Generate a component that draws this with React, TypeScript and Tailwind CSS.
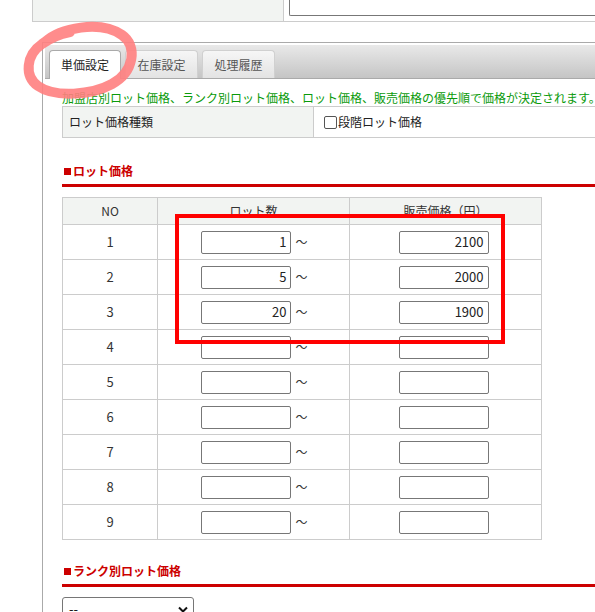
import React from "react";

const lotRows = [
  { no: 1, lot: "1", price: "2100" },
  { no: 2, lot: "5", price: "2000" },
  { no: 3, lot: "20", price: "1900" },
  { no: 4, lot: "", price: "" },
  { no: 5, lot: "", price: "" },
  { no: 6, lot: "", price: "" },
  { no: 7, lot: "", price: "" },
  { no: 8, lot: "", price: "" },
  { no: 9, lot: "", price: "" },
];

const tabs = ["単価設定", "在庫設定", "処理履歴"];

function NumBox({ value }: { value: string }) {
  return (
    <div className="flex h-[23px] w-[90px] items-center justify-end rounded-[2px] border border-[#777] bg-white pr-[4px] text-[13px] text-[#222]">
      {value}
    </div>
  );
}

function SectionTitle({ children }: { children: React.ReactNode }) {
  return (
    <div>
      <div className="flex items-center pl-[2px] text-[12px] font-bold leading-[18px] text-[#cc0000]">
        <span className="mr-[2px] inline-block h-[7px] w-[7px] bg-[#cc0000]" />
        {children}
      </div>
      <div className="mt-[4px] h-[3px] w-full bg-[#cc0000]" />
    </div>
  );
}

export default function App() {
  return (
    <div
      className="relative h-[612px] w-[595px] overflow-hidden bg-white text-[12px] text-[#333]"
      style={{ fontFamily: '"Noto Sans CJK JP", "Noto Sans", sans-serif' }}
    >
      {/* tail of the panel above */}
      <div className="ml-[32px] flex h-[22px] w-[700px] border-b border-l border-[#ccc]">
        <div className="w-[251px] border-r border-[#ccc] bg-[#f2f4f2]" />
        <div className="pl-[5px]">
          <div className="h-[16px] w-[400px] rounded-bl-[2px] border-b border-l border-[#777]" />
        </div>
      </div>

      {/* tab panel */}
      <div className="ml-[42px] mt-[20px] w-[700px] border-l border-t border-[#aaa] pl-[2px] pt-[2px]">
        <div className="flex h-[34px] items-end gap-[4px] border-b border-[#aaa] bg-gradient-to-b from-[#e9e9e9] to-[#c5c5c5] pl-[4px]">
          {tabs.map((t, i) =>
            i === 0 ? (
              <div
                key={t}
                className="-mb-px flex h-[29px] w-[72px] items-center justify-center rounded-t-[4px] border-x border-t border-[#aaa] bg-white text-[#222]"
              >
                {t}
              </div>
            ) : (
              <div
                key={t}
                className="flex h-[28px] w-[73px] items-center justify-center rounded-t-[4px] border-x border-t border-[#d0d0d0] bg-gradient-to-b from-[#f6f6f6] to-[#e3e3e3] text-[#555]"
              >
                {t}
              </div>
            ),
          )}
        </div>

        <div className="pl-[17px]">
          <p className="mt-[10px] whitespace-nowrap text-[12px] leading-[17px] text-[#0a9a0a]">
            加盟店別ロット価格、ランク別ロット価格、ロット価格、販売価格の優先順で価格が決定されます。
          </p>

          <div className="flex h-[32px] w-[640px] border border-[#ccc]">
            <div className="flex w-[251px] items-center border-r border-[#ccc] bg-[#f2f4f2] pl-[6px] text-[#222]">
              ロット価格種類
            </div>
            <div className="flex items-center pl-[10px] text-[#222]">
              <span className="mr-[1px] inline-block h-[13px] w-[13px] rounded-[2px] border border-[#555] bg-white" />
              段階ロット価格
            </div>
          </div>

          <div className="mt-[24px] w-[640px]">
            <SectionTitle>ロット価格</SectionTitle>
          </div>

          <table className="mt-[10px] w-[480px] table-fixed border-collapse text-center">
            <colgroup>
              <col className="w-[95px]" />
              <col className="w-[192px]" />
              <col className="w-[192px]" />
            </colgroup>
            <thead>
              <tr className="h-[27px] bg-[#f2f4f2]">
                <th className="border border-[#ccc] font-normal">NO</th>
                <th className="border border-[#ccc] font-normal">ロット数</th>
                <th className="border border-[#ccc] font-normal">販売価格（円）</th>
              </tr>
            </thead>
            <tbody>
              {lotRows.map((r) => (
                <tr key={r.no} className="h-[35px]">
                  <td className="border border-[#ccc] text-[13px]">{r.no}</td>
                  <td className="border border-[#ccc]">
                    <div className="flex items-center justify-center gap-[4px] pl-[2px]">
                      <NumBox value={r.lot} />
                      <span className="text-[12px]">～</span>
                    </div>
                  </td>
                  <td className="border border-[#ccc]">
                    <div className="flex justify-center pr-[4px]">
                      <NumBox value={r.price} />
                    </div>
                  </td>
                </tr>
              ))}
            </tbody>
          </table>

          <div className="mt-[22px] w-[640px]">
            <SectionTitle>ランク別ロット価格</SectionTitle>
          </div>

          <div className="mt-[10px] flex h-[24px] w-[132px] items-center justify-between rounded-[3px] border border-[#767676] pl-[6px] pr-[5px] text-[13px] text-[#111]">
            <span>--</span>
            <svg width="10" height="7" viewBox="0 0 10 7">
              <path d="M1 1.5 L5 5.5 L9 1.5" fill="none" stroke="#111" strokeWidth="2" />
            </svg>
          </div>
        </div>
      </div>

      {/* annotations */}
      <svg className="pointer-events-none absolute left-0 top-0" width="595" height="612">
        <path
          d="M 45 42 C 60 28, 100 20, 122 35 C 138 46, 134 72, 112 84 C 92 95, 55 98, 38 86 C 24 76, 26 55, 42 44 C 50 38, 60 34, 70 32"
          fill="none"
          stroke="#ff8080"
          strokeOpacity="0.9"
          strokeWidth="10"
          strokeLinecap="round"
        />
      </svg>
      <div className="pointer-events-none absolute left-[175px] top-[214px] h-[130px] w-[330px] border-4 border-[#ff0000]" />
    </div>
  );
}
